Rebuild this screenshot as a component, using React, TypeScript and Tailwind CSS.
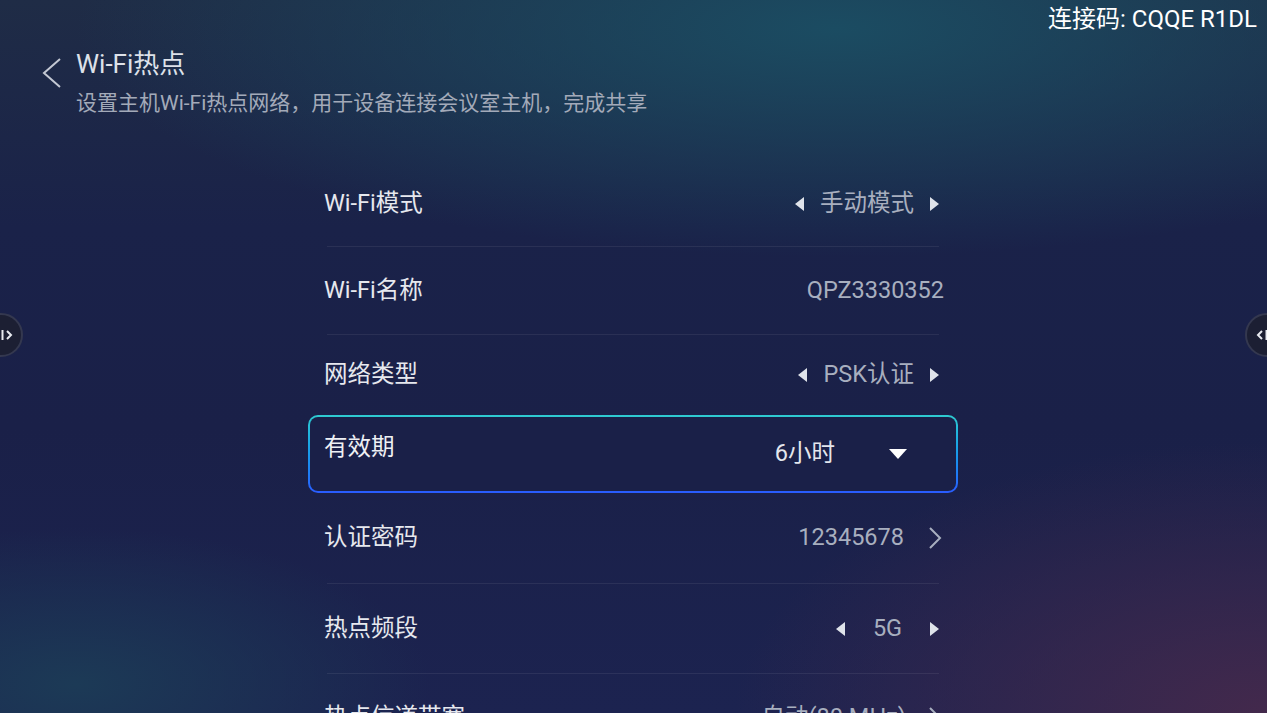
import React from 'react';

const FONT = { fontFamily: 'Roboto, "Noto Sans CJK SC", sans-serif' };

const TriLeft = () => (
  <svg width="9" height="14" viewBox="0 0 9 14">
    <polygon points="9,0 0,7 9,14" fill="#dfe3ea" />
  </svg>
);

const TriRight = () => (
  <svg width="9" height="14" viewBox="0 0 9 14">
    <polygon points="0,0 9,7 0,14" fill="#dfe3ea" />
  </svg>
);

const Chevron = () => (
  <svg width="14" height="22" viewBox="0 0 14 22">
    <polyline points="2,1 12,11 2,21" fill="none" stroke="#a8afbf" strokeWidth="2" />
  </svg>
);

const Divider = () => <div className="h-px mx-[19px] bg-[#ffffff12]" />;

interface RowProps {
  label: string;
  height: string;
  children: React.ReactNode;
  divider?: boolean;
}

const Row: React.FC<RowProps> = ({ label, height, children, divider = true }) => (
  <div className="flex flex-col">
    <div className={`flex items-center justify-between pl-[16px] pr-[14px] ${height}`}>
      <span className="text-[23.5px] text-[#e6e8ee]">{label}</span>
      <div className="flex items-center text-[23.5px] text-[#a8afbf]">{children}</div>
    </div>
    {divider && <Divider />}
  </div>
);

const Selector = ({ value }: { value: string }) => (
  <div className="flex items-center mr-[5px]">
    <TriLeft />
    <span className="px-[16px] min-w-[85px] text-center">{value}</span>
    <TriRight />
  </div>
);

const EdgeHandle = ({ side }: { side: 'left' | 'right' }) => (
  <div
    className={`absolute top-[313px] w-[44px] h-[44px] rounded-full bg-[#1c1f33] border-2 border-[#34384f] flex items-center ${
      side === 'left' ? 'left-[-21px] justify-end pr-[8px]' : 'right-[-22px] justify-start pl-[9px]'
    }`}
  >
    {side === 'left' ? (
      <svg width="12" height="12" viewBox="0 0 12 12">
        <line x1="1.5" y1="1" x2="1.5" y2="11" stroke="#e8eaf0" strokeWidth="2" />
        <polyline points="6,2 10,6 6,10" fill="none" stroke="#e8eaf0" strokeWidth="2" />
      </svg>
    ) : (
      <svg width="12" height="12" viewBox="0 0 12 12">
        <polyline points="6,2 2,6 6,10" fill="none" stroke="#e8eaf0" strokeWidth="2" />
        <line x1="10.5" y1="1" x2="10.5" y2="11" stroke="#e8eaf0" strokeWidth="2" />
      </svg>
    )}
  </div>
);

export default function App() {
  return (
    <div
      className="relative w-full h-[713px] overflow-hidden bg-[radial-gradient(ellipse_60%_32%_at_66%_4%,#1b4c62_0%,#1b4a6000_100%),radial-gradient(ellipse_42%_38%_at_100%_100%,#43294c_0%,#3d284800_100%),radial-gradient(ellipse_28%_22%_at_6%_96%,#1c3a56_0%,#1c3a5500_100%),linear-gradient(to_bottom,#1f2c46_0%,#1a2249_32%,#1a2048_60%,#1c2350_100%)]"
      style={FONT}
    >
      {/* top bar */}
      <div className="h-[40px] flex justify-end pr-[10px] pt-[3px]">
        <span className="text-[24px] leading-[32px] text-white">连接码: CQQE R1DL</span>
      </div>

      {/* header */}
      <div className="flex pl-[42px]">
        <div className="w-[34px] pt-[18px]">
          <svg width="20" height="30" viewBox="0 0 20 30">
            <polyline points="18,1 2,15 18,29" fill="none" stroke="#c3c8d3" strokeWidth="2" />
          </svg>
        </div>
        <div className="flex flex-col pt-[8px]">
          <span className="text-[26px] leading-[32px] text-[#dde1e9]">Wi-Fi热点</span>
          <span className="mt-[9px] text-[21px] leading-[28px] text-[#a3aab9]">
            设置主机Wi-Fi热点网络，用于设备连接会议室主机，完成共享
          </span>
        </div>
      </div>

      {/* settings list */}
      <div className="ml-[308px] w-[650px] mt-[44px] flex flex-col">
        <Row label="Wi-Fi模式" height="h-[85px]">
          <Selector value="手动模式" />
        </Row>
        <Row label="Wi-Fi名称" height="h-[87px]">
          <span>QPZ3330352</span>
        </Row>
        <Row label="网络类型" height="h-[80px]" divider={false}>
          <Selector value="PSK认证" />
        </Row>

        {/* focused item */}
        <div className="h-[78px] rounded-[10px] p-[2px] bg-gradient-to-b from-[#2fcbd0] to-[#2a5bff]">
          <div className="h-full rounded-[8px] bg-[#1a2048] flex justify-between pl-[14px] pr-[49px]">
            <span className="mt-[15px] self-start text-[23.5px] leading-[30px] text-[#eef0f4]">有效期</span>
            <div className="self-center flex items-center">
              <span className="text-[23.5px] text-[#e3e6ed]">6小时</span>
              <svg className="ml-[54px]" width="18" height="10" viewBox="0 0 18 10">
                <polygon points="0,0 18,0 9,10" fill="#ffffff" />
              </svg>
            </div>
          </div>
        </div>

        <Row label="认证密码" height="h-[90px]">
          <span>12345678</span>
          <span className="ml-[24px] mr-[2px] flex">
            <Chevron />
          </span>
        </Row>
        <Row label="热点频段" height="h-[89px]">
          <Selector value="5G" />
        </Row>
        <Row label="热点信道带宽" height="h-[88px]">
          <span>自动(80 MHz)</span>
          <span className="ml-[22px] mr-[2px] flex">
            <Chevron />
          </span>
        </Row>
      </div>

      <EdgeHandle side="left" />
      <EdgeHandle side="right" />
    </div>
  );
}
